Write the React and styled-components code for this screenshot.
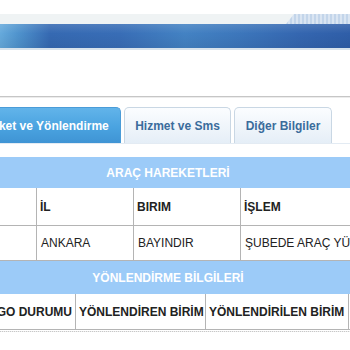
import React from 'react';
import styled, { createGlobalStyle } from 'styled-components';

const GlobalStyle = createGlobalStyle`
  body {
    margin: 0;
    background: #ffffff;
    overflow: hidden;
    font-family: "Liberation Sans", Arial, Helvetica, sans-serif;
  }
`;

const Page = styled.div`
  width: 350px;
  height: 350px;
  overflow: hidden;
  padding-top: 14px;
  box-sizing: border-box;
`;

const TopStrip = styled.div`
  height: 10px;
  display: flex;
  background: #eff3f4;
`;

const StripFill = styled.div`
  flex: 1;
`;

const StripStripes = styled.div`
  width: 64px;
  background: repeating-linear-gradient(
    90deg,
    #c3d5ea 0px,
    #c3d5ea 2px,
    #dae5f2 2px,
    #dae5f2 4px
  );
  clip-path: polygon(8px 0, 100% 0, 100% 100%, 0 100%);
`;

const BlueBand = styled.div`
  height: 24px;
  background:
    linear-gradient(180deg, rgba(255,255,255,0.12) 0%, rgba(255,255,255,0) 40%, rgba(0,0,0,0.06) 100%),
    linear-gradient(90deg, #66aadc 0px, #4f93cd 18px, #3569b2 50px, #386db6 120px, #4382c3 185px, #3c76bb 240px, #3466b0 300px, #2f5ea8 350px);
`;

const BandEdge = styled.div`
  height: 2px;
  background: #d8e3ec;
`;

const Divider = styled.div`
  margin-top: 46px;
  height: 1px;
  background: #c6c6c6;
  border-bottom: 1px solid #ececec;
`;

const TabRow = styled.div`
  display: flex;
  gap: 3px;
  margin-top: 9px;
  margin-left: -40px;
  height: 36px;
  border-bottom: 1px solid #e3ebf3;
`;

const Tab = styled.div`
  width: ${p => p.$w}px;
  box-sizing: border-box;
  display: flex;
  align-items: center;
  justify-content: center;
  font-size: 12px;
  font-weight: bold;
  border-radius: 5px 5px 0 0;
  color: ${p => (p.$active ? '#ffffff' : '#3b6c9c')};
  border: 1px solid ${p => (p.$active ? '#4a9cd8' : '#c9d7e4')};
  border-bottom: none;
  background: ${p =>
    p.$active
      ? 'linear-gradient(180deg, #62b4ea 0%, #4aa3e0 55%, #3f94d4 100%)'
      : 'linear-gradient(180deg, #fbfdff 0%, #eef4fa 60%, #e5eef7 100%)'};
`;

const TableWrap = styled.div`
  margin-top: 13px;
  margin-left: -70px;
  width: 476px;
`;

const Table = styled.table`
  width: 100%;
  border-collapse: collapse;
  table-layout: fixed;
  font-size: 12px;
  color: #222222;
`;

const Caption = styled.th`
  height: ${p => p.$h}px;
  background: #9ccbf8;
  color: #ffffff;
  font-weight: bold;
  font-size: 12px;
  text-align: center;
  padding: 0;
  border: 1px solid #9ccbf8;
`;

const HeadCell = styled.th`
  height: ${p => p.$h}px;
  font-weight: bold;
  padding: 0 3px;
  border: 1px solid #b4b4b4;
  white-space: nowrap;
  overflow: hidden;
  text-align: ${p => p.$align || 'left'};
`;

const Cell = styled.td`
  height: 34px;
  padding: 0 4px;
  border: 1px solid #b4b4b4;
  white-space: nowrap;
  overflow: hidden;
`;

const BottomRule = styled.div`
  height: 1px;
  margin-top: 1px;
  background: repeating-linear-gradient(90deg, #c8c8c8 0 1px, #eeeeee 1px 2px);
`;

export default function App() {
  return (
    <>
      <GlobalStyle />
      <Page>
        <TopStrip>
          <StripFill />
          <StripStripes />
        </TopStrip>
        <BlueBand />
        <BandEdge />
        <Divider />
        <TabRow>
          <Tab $active $w={161}>Hareket ve Yönlendirme</Tab>
          <Tab $w={107}>Hizmet ve Sms</Tab>
          <Tab $w={98}>Diğer Bilgiler</Tab>
        </TabRow>
        <TableWrap>
          <Table>
            <colgroup>
              <col style={{ width: 106 }} />
              <col style={{ width: 97 }} />
              <col style={{ width: 107 }} />
              <col />
            </colgroup>
            <thead>
              <tr>
                <Caption colSpan={4} $h={29}>ARAÇ HAREKETLERİ</Caption>
              </tr>
              <tr>
                <HeadCell $h={37}></HeadCell>
                <HeadCell $h={37}>İL</HeadCell>
                <HeadCell $h={37}>BIRIM</HeadCell>
                <HeadCell $h={37}>İŞLEM</HeadCell>
              </tr>
            </thead>
            <tbody>
              <tr>
                <Cell></Cell>
                <Cell>ANKARA</Cell>
                <Cell>BAYINDIR</Cell>
                <Cell>ŞUBEDE ARAÇ YÜKLEME</Cell>
              </tr>
            </tbody>
          </Table>
          <Table>
            <colgroup>
              <col style={{ width: 145 }} />
              <col style={{ width: 130 }} />
              <col style={{ width: 143 }} />
              <col />
            </colgroup>
            <thead>
              <tr>
                <Caption colSpan={4} $h={31}>YÖNLENDİRME BİLGİLERİ</Caption>
              </tr>
              <tr>
                <HeadCell $h={35} $align="right">KARGO DURUMU</HeadCell>
                <HeadCell $h={35}>YÖNLENDİREN BİRİM</HeadCell>
                <HeadCell $h={35}>YÖNLENDİRİLEN BİRİM</HeadCell>
                <HeadCell $h={35}></HeadCell>
              </tr>
            </thead>
          </Table>
          <BottomRule />
        </TableWrap>
      </Page>
    </>
  );
}
